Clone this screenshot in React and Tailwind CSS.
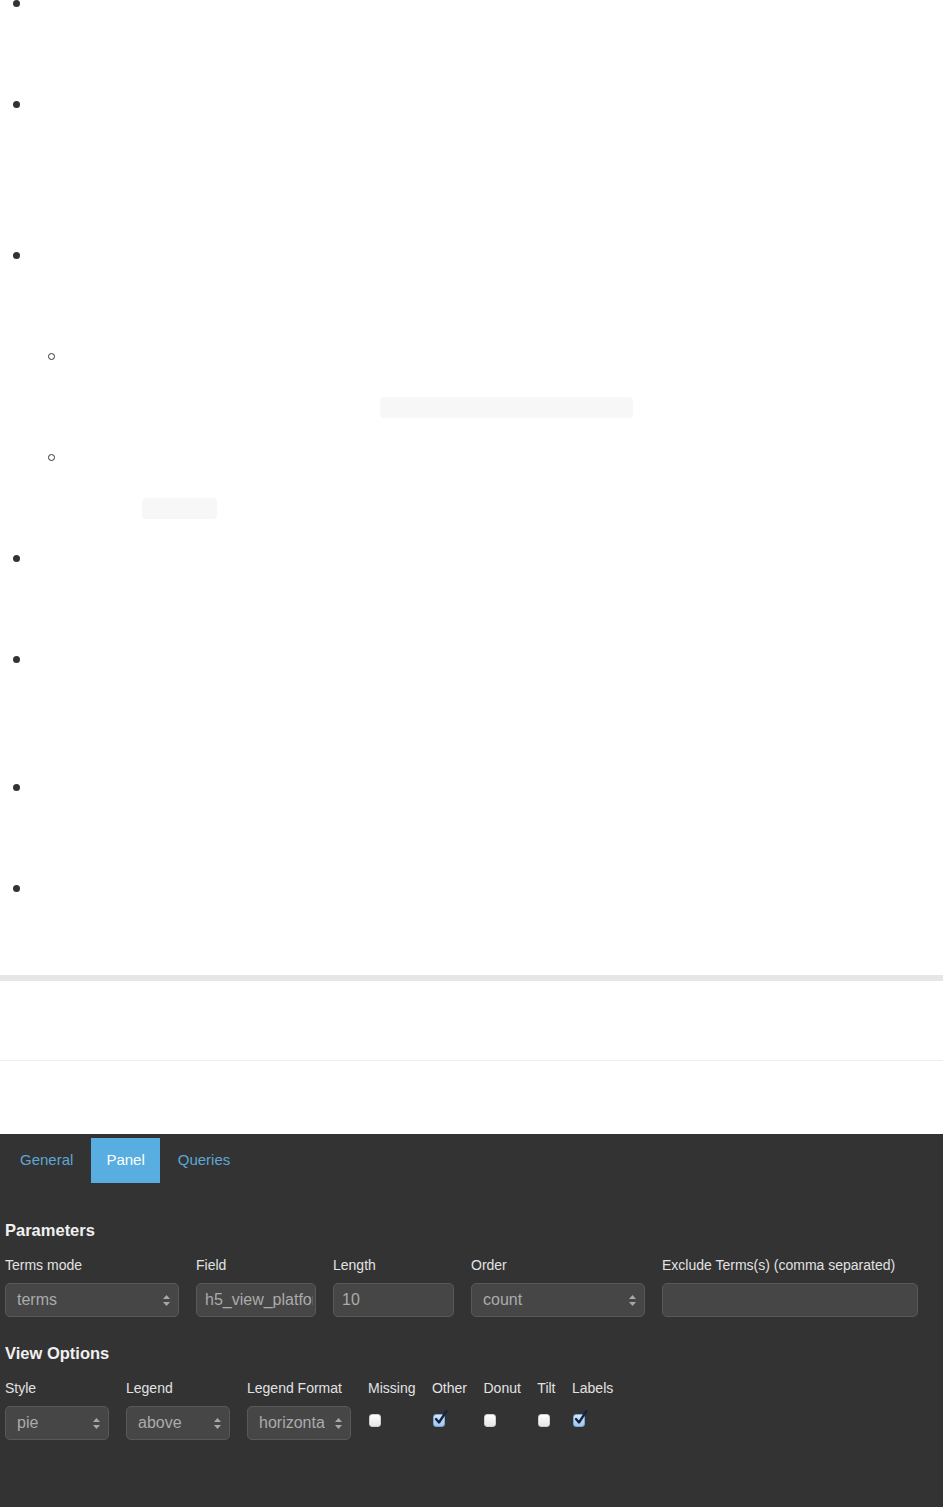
import React from "react";

const font = { fontFamily: '"Liberation Sans", Arial, sans-serif' };

function Disc() {
  return <span className="block w-[7px] h-[7px] rounded-full bg-[#333]" />;
}

function Ring() {
  return <span className="block w-[7px] h-[7px] rounded-full border-[1.5px] border-[#333]" />;
}

function Arrows() {
  return (
    <svg width="7" height="11" viewBox="0 0 7 11" className="shrink-0">
      <polygon points="3.5,0 7,4 0,4" fill="#a8a8a8" />
      <polygon points="0,7 7,7 3.5,11" fill="#a8a8a8" />
    </svg>
  );
}

function Select({ w, value }) {
  return (
    <div className={`${w} h-[34px] mt-[8px] rounded-[5px] border border-[#595959] bg-[#464646] flex items-center pl-[11px] pr-[8px] overflow-hidden`}>
      <span className="flex-1 mr-[10px] text-[16px] text-[#ababab] whitespace-nowrap overflow-hidden">{value}</span>
      <Arrows />
    </div>
  );
}

function Input({ w, value }) {
  return (
    <div className={`${w} h-[34px] mt-[8px] rounded-[5px] border border-[#595959] bg-[#464646] flex items-center pl-[8px] pr-[2px] overflow-hidden`}>
      <span className="flex-1 text-[16px] text-[#ababab] whitespace-nowrap overflow-hidden">{value}</span>
    </div>
  );
}

function Label({ children }) {
  return <div className="text-[14px] leading-[20px] text-[#e2e2e2] whitespace-nowrap">{children}</div>;
}

function Check({ checked }) {
  if (!checked) {
    return (
      <div className="mt-[16px] ml-[1px] w-[12px] h-[13px] rounded-[3px] bg-gradient-to-b from-[#ffffff] to-[#e6e6e6] border border-[#cfcfcf]" />
    );
  }
  return (
    <div className="relative mt-[16px] ml-[1px] w-[12px] h-[13px] rounded-[3px] bg-gradient-to-b from-[#d3e7fb] to-[#9fc8ef] border border-[#7ea9d6]">
      <svg width="14" height="15" viewBox="0 0 14 15" className="absolute left-[0px] top-[-5px]">
        <path d="M2 9 L5 12.5 L12.5 1" fill="none" stroke="#15233f" strokeWidth="2.3" strokeLinecap="round" strokeLinejoin="round" />
      </svg>
    </div>
  );
}

export default function App() {
  return (
    <div className="w-[943px] bg-white" style={font}>
      {/* Top list area */}
      <div className="flex flex-col">
        <div className="h-[101px] pl-[13px]"><Disc /></div>
        <div className="h-[151px] pl-[13px]"><Disc /></div>
        <div className="h-[101px] pl-[13px]"><Disc /></div>
        <div className="h-[101px] pl-[48px]">
          <Ring />
          <div className="mt-[37px] ml-[332px] w-[253px] h-[21px] rounded-[4px] bg-[#f7f7f7]" />
        </div>
        <div className="h-[101px] pl-[48px]">
          <Ring />
          <div className="mt-[37px] ml-[94px] w-[75px] h-[21px] rounded-[4px] bg-[#f7f7f7]" />
        </div>
        <div className="h-[101px] pl-[13px]"><Disc /></div>
        <div className="h-[128px] pl-[13px]"><Disc /></div>
        <div className="h-[101px] pl-[13px]"><Disc /></div>
        <div className="h-[90px] pl-[13px]"><Disc /></div>
      </div>

      <div className="h-[6px] bg-[#e6e6e6]" />
      <div className="h-[79px]" />
      <div className="h-px bg-[#eeeeee]" />
      <div className="h-[73px]" />

      {/* Dark editor panel */}
      <div className="h-[373px] bg-[#333333] pt-[4px]">
        <div className="flex pl-[5px] gap-[3px]">
          <div className="h-[45px] px-[15px] flex items-center text-[15px] text-[#5ea7d3]">General</div>
          <div className="h-[45px] px-[15px] flex items-center text-[15px] text-white bg-[#58aee0]">Panel</div>
          <div className="h-[45px] px-[15px] flex items-center text-[15px] text-[#5ea7d3]">Queries</div>
        </div>

        <div className="mt-[37px] pl-[5px] text-[16.5px] leading-[20px] font-bold text-[#f0f0f0]">Parameters</div>

        <div className="mt-[15px] pl-[5px] flex gap-[17px]">
          <div>
            <Label>Terms mode</Label>
            <Select w="w-[174px]" value="terms" />
          </div>
          <div>
            <Label>Field</Label>
            <Input w="w-[120px]" value="h5_view_platform" />
          </div>
          <div>
            <Label>Length</Label>
            <Input w="w-[121px]" value="10" />
          </div>
          <div>
            <Label>Order</Label>
            <Select w="w-[174px]" value="count" />
          </div>
          <div>
            <Label>Exclude Terms(s) (comma separated)</Label>
            <Input w="w-[256px]" value="" />
          </div>
        </div>

        <div className="mt-[26px] pl-[5px] text-[16.5px] leading-[20px] font-bold text-[#f0f0f0]">View Options</div>

        <div className="mt-[15px] pl-[5px] flex gap-[17px]">
          <div>
            <Label>Style</Label>
            <Select w="w-[104px]" value="pie" />
          </div>
          <div>
            <Label>Legend</Label>
            <Select w="w-[104px]" value="above" />
          </div>
          <div>
            <Label>Legend Format</Label>
            <Select w="w-[104px]" value="horizontal" />
          </div>
          <div className="flex gap-[16.5px]">
            <div>
              <Label>Missing</Label>
              <Check checked={false} />
            </div>
            <div>
              <Label>Other</Label>
              <Check checked={true} />
            </div>
            <div>
              <Label>Donut</Label>
              <Check checked={false} />
            </div>
            <div>
              <Label>Tilt</Label>
              <Check checked={false} />
            </div>
            <div>
              <Label>Labels</Label>
              <Check checked={true} />
            </div>
          </div>
        </div>
      </div>
    </div>
  );
}
